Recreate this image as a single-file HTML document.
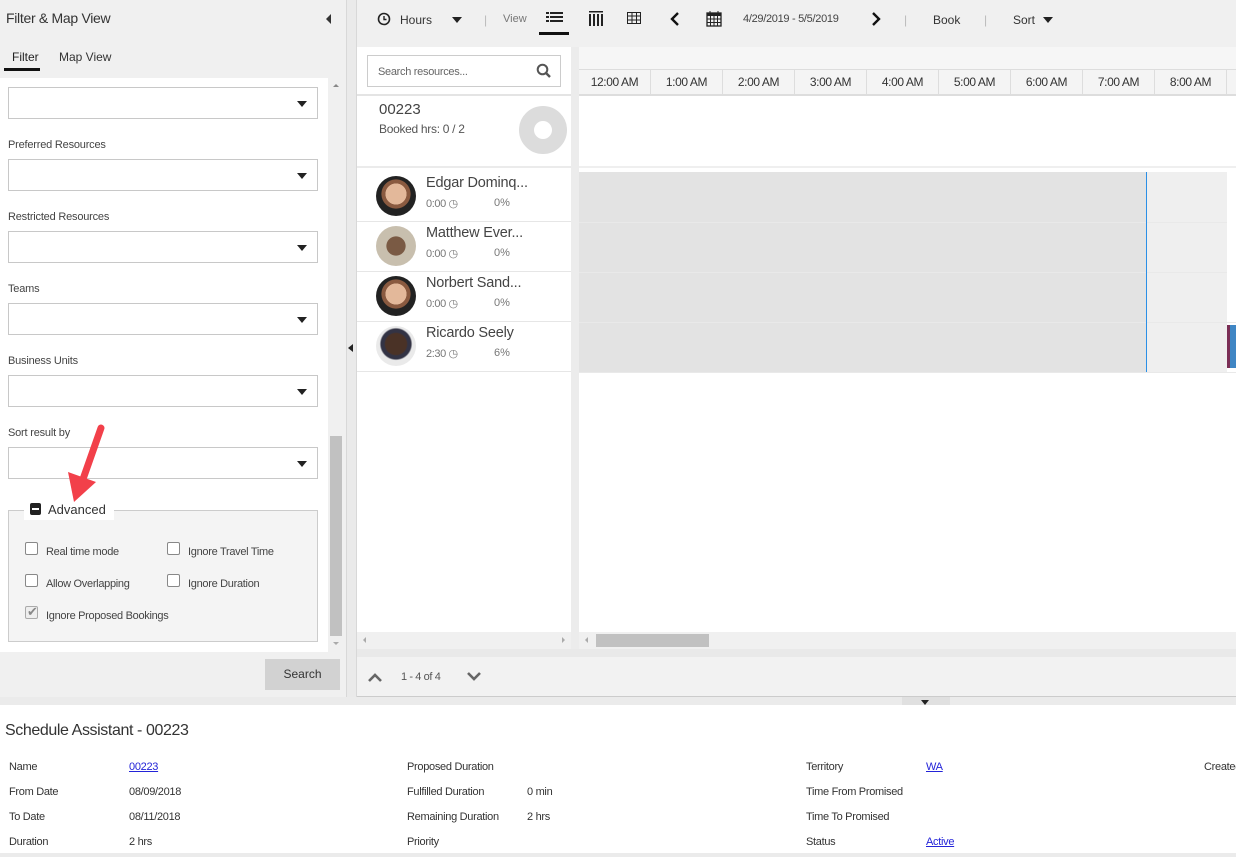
<!DOCTYPE html>
<html><head><meta charset="utf-8"><style>
*{box-sizing:border-box;margin:0;padding:0}
body{width:1236px;height:857px;overflow:hidden;background:#fff;font-family:"Liberation Sans",sans-serif;color:#333;position:relative;font-size:11px}
.a{position:absolute}
.sel{position:absolute;left:8px;width:310px;height:32px;border:1px solid #c8c8c8;background:#fff}
.sel:after{content:"";position:absolute;right:10px;top:13px;border-left:5px solid transparent;border-right:5px solid transparent;border-top:6px solid #222}
.lbl{position:absolute;left:8px;font-size:11px;color:#444;letter-spacing:-0.2px}
.cb{position:absolute;width:13px;height:13px;border:1px solid #888;border-radius:2px;background:#fff}
.cbt{position:absolute;font-size:11px;color:#444;letter-spacing:-0.3px}
.hr{position:absolute;top:70px;height:25px;width:72px;border-right:1px solid #ddd;font-size:12px;color:#333;text-align:center;line-height:25px;letter-spacing:-0.4px}
.row{position:absolute;left:357px;width:214px;height:50px;border-bottom:1px solid #e6e6e6;background:#fff}
.av{position:absolute;left:19px;top:4px;width:40px;height:40px;border-radius:50%;overflow:hidden}
.nm{position:absolute;left:69px;top:3px;font-size:14.5px;color:#444;letter-spacing:-0.2px}
.st{position:absolute;left:69px;top:25px;font-size:11px;color:#777;letter-spacing:-0.4px}
.pc{position:absolute;left:137px;top:25px;font-size:11px;color:#777}
.fl{position:absolute;font-size:11px;color:#333;letter-spacing:-0.3px}
.lnk{text-decoration:underline;color:#2323d8}
</style></head><body>
<div class="a" style="left:0;top:0;width:346px;height:697px;background:#f0f0f0"></div>
<div class="a" style="left:6px;top:10px;font-size:14px;color:#333;letter-spacing:-0.3px">Filter &amp; Map View</div>
<div class="a" style="left:326px;top:14px;border-top:5px solid transparent;border-bottom:5px solid transparent;border-right:5px solid #333"></div>
<div class="a" style="left:12px;top:50px;font-size:12px;color:#222">Filter</div>
<div class="a" style="left:59px;top:50px;font-size:12px;color:#333">Map View</div>
<div class="a" style="left:4px;top:68px;width:36px;height:3px;background:#111"></div>
<div class="a" style="left:0;top:78px;width:328px;height:574px;background:#fff"></div>
<div class="a" style="left:328px;top:78px;width:17px;height:574px;background:#f0f0f0"></div>
<div class="a" style="left:330px;top:436px;width:12px;height:200px;background:#c1c1c1"></div>
<div class="a" style="left:333px;top:84px;border-left:3px solid transparent;border-right:3px solid transparent;border-bottom:3px solid #888"></div>
<div class="a" style="left:333px;top:642px;border-left:3px solid transparent;border-right:3px solid transparent;border-top:3px solid #aaa"></div>
<div class="sel" style="top:87px"></div>
<div class="lbl" style="top:139px">Preferred Resources</div>
<div class="sel" style="top:159px"></div>
<div class="lbl" style="top:211px">Restricted Resources</div>
<div class="sel" style="top:231px"></div>
<div class="lbl" style="top:283px">Teams</div>
<div class="sel" style="top:303px"></div>
<div class="lbl" style="top:355px">Business Units</div>
<div class="sel" style="top:375px"></div>
<div class="lbl" style="top:427px">Sort result by</div>
<div class="sel" style="top:447px"></div>
<div class="a" style="left:8px;top:510px;width:310px;height:132px;border:1px solid #ccc;background:#f4f4f4"></div>
<div class="a" style="left:24px;top:500px;width:90px;height:20px;background:#fff"></div>
<div class="a" style="left:30px;top:503px;width:11px;height:12px;background:#222;border-radius:2px"></div>
<div class="a" style="left:32px;top:508px;width:7px;height:2px;background:#fff"></div>
<div class="a" style="left:48px;top:502px;font-size:13px;color:#333">Advanced</div>
<div class="cb" style="left:25px;top:542px"></div><div class="cbt" style="left:46px;top:546px">Real time mode</div>
<div class="cb" style="left:167px;top:542px"></div><div class="cbt" style="left:188px;top:546px">Ignore Travel Time</div>
<div class="cb" style="left:25px;top:574px"></div><div class="cbt" style="left:46px;top:578px">Allow Overlapping</div>
<div class="cb" style="left:167px;top:574px"></div><div class="cbt" style="left:188px;top:578px">Ignore Duration</div>
<div class="cb" style="left:25px;top:606px;background:#eee;border-color:#aaa"></div><div class="a" style="left:27px;top:604px;font-size:13px;color:#888">✔</div><div class="cbt" style="left:46px;top:610px">Ignore Proposed Bookings</div>
<svg class="a" style="left:60px;top:420px" width="50" height="90"><path d="M41 8 L22 62" stroke="#f2404a" stroke-width="7" stroke-linecap="round"/><path d="M8 52 L14 82 L36 62 Z" fill="#f2404a"/></svg>
<div class="a" style="left:265px;top:659px;width:75px;height:31px;background:#d2d2d2;font-size:12px;color:#333;text-align:center;line-height:31px">Search</div>
<div class="a" style="left:346px;top:0;width:11px;height:697px;background:#eaeaea;border-left:1px solid #d8d8d8;border-right:1px solid #d8d8d8"></div>
<div class="a" style="left:348px;top:344px;border-top:4px solid transparent;border-bottom:4px solid transparent;border-right:5px solid #222"></div>
<div class="a" style="left:357px;top:0;width:879px;height:47px;background:#f0f0f0"></div>
<svg class="a" style="left:377px;top:12px" width="14" height="14"><circle cx="7" cy="7" r="5.5" fill="none" stroke="#222" stroke-width="1.6"/><path d="M7 4V7.5H9.5" stroke="#222" stroke-width="1.4" fill="none"/></svg>
<div class="a" style="left:400px;top:13px;font-size:12px;color:#333">Hours</div>
<div class="a" style="left:452px;top:17px;border-left:5px solid transparent;border-right:5px solid transparent;border-top:6px solid #222"></div>
<div class="a" style="left:484px;top:13px;color:#bbb;font-size:12px">|</div>
<div class="a" style="left:503px;top:13px;font-size:11px;color:#777">View</div>
<svg class="a" style="left:546px;top:11px" width="18" height="14"><g fill="#222"><rect x="0" y="1" width="3" height="2"/><rect x="4" y="1" width="13" height="2"/><rect x="0" y="5" width="3" height="2"/><rect x="4" y="5" width="13" height="2"/><rect x="0" y="9" width="3" height="2"/><rect x="4" y="9" width="13" height="2"/></g></svg>
<div class="a" style="left:539px;top:32px;width:30px;height:3px;background:#111"></div>
<svg class="a" style="left:588px;top:11px" width="16" height="16"><g fill="#222"><rect x="1" y="3" width="2" height="12"/><rect x="5" y="3" width="2" height="12"/><rect x="9" y="3" width="2" height="12"/><rect x="13" y="3" width="2" height="12"/><rect x="1" y="0" width="14" height="1.5"/></g></svg>
<svg class="a" style="left:627px;top:12px" width="15" height="13"><rect x="0.5" y="0.5" width="13" height="11" fill="none" stroke="#222"/><path d="M0 4H14M0 8H14M5 0V12M9.5 0V12" stroke="#222"/></svg>
<svg class="a" style="left:669px;top:11px" width="12" height="16"><path d="M9 2L3 8L9 14" stroke="#111" stroke-width="2.4" fill="none"/></svg>
<svg class="a" style="left:706px;top:10px" width="16" height="17"><rect x="1" y="3" width="14" height="13" fill="none" stroke="#222" stroke-width="1.3"/><rect x="1" y="3" width="14" height="3" fill="#222"/><path d="M4 1V5M12 1V5M1 9H15M1 12.5H15M4.5 6V16M8 6V16M11.5 6V16" stroke="#222"/></svg>
<div class="a" style="left:743px;top:13px;font-size:11px;color:#444;letter-spacing:-0.3px">4/29/2019 - 5/5/2019</div>
<svg class="a" style="left:870px;top:11px" width="12" height="16"><path d="M3 2L9 8L3 14" stroke="#111" stroke-width="2.4" fill="none"/></svg>
<div class="a" style="left:904px;top:13px;color:#bbb;font-size:12px">|</div>
<div class="a" style="left:933px;top:13px;font-size:12px;color:#333">Book</div>
<div class="a" style="left:984px;top:13px;color:#bbb;font-size:12px">|</div>
<div class="a" style="left:1013px;top:13px;font-size:12px;color:#333">Sort</div>
<div class="a" style="left:1043px;top:17px;border-left:5px solid transparent;border-right:5px solid transparent;border-top:6px solid #222"></div>
<div class="a" style="left:357px;top:47px;width:214px;height:603px;background:#fff"></div>
<div class="a" style="left:571px;top:47px;width:8px;height:603px;background:#ececec"></div>
<div class="a" style="left:367px;top:55px;width:194px;height:32px;border:1px solid #ccc;background:#fff"></div>
<div class="a" style="left:378px;top:66px;font-size:11px;color:#666;letter-spacing:-0.3px">Search resources...</div>
<svg class="a" style="left:536px;top:63px" width="16" height="16"><circle cx="6.5" cy="6.5" r="4.8" fill="none" stroke="#555" stroke-width="2"/><path d="M10 10L14 14" stroke="#555" stroke-width="2.4"/></svg>
<div class="a" style="left:357px;top:94px;width:214px;height:2px;background:#e4e4e4"></div>
<div class="a" style="left:379px;top:101px;font-size:15px;color:#444">00223</div>
<div class="a" style="left:379px;top:122px;font-size:12px;color:#555;letter-spacing:-0.3px">Booked hrs: 0 / 2</div>
<div class="a" style="left:519px;top:106px;width:48px;height:48px;border-radius:50%;border:15px solid #dcdcdc;background:#fff"></div>
<div class="a" style="left:357px;top:166px;width:214px;height:2px;background:#ebebeb"></div>
<div class="row" style="top:172px"><div class="av" style="background:radial-gradient(circle at 50% 45%,#e3b89a 0 35%,#8a5a40 36% 48%,#222 50%)"></div><div class="nm">Edgar Dominq...</div><div class="st">0:00 ◷</div><div class="pc">0%</div></div>
<div class="row" style="top:222px"><div class="av" style="background:radial-gradient(circle at 50% 50%,#7a5a44 0 33%,#c8bfae 35%)"></div><div class="nm">Matthew Ever...</div><div class="st">0:00 ◷</div><div class="pc">0%</div></div>
<div class="row" style="top:272px"><div class="av" style="background:radial-gradient(circle at 50% 45%,#e3b89a 0 35%,#8a5a40 36% 48%,#222 50%)"></div><div class="nm">Norbert Sand...</div><div class="st">0:00 ◷</div><div class="pc">0%</div></div>
<div class="row" style="top:322px"><div class="av" style="background:radial-gradient(circle at 50% 45%,#4a3226 0 35%,#334 40% 50%,#eaeaea 55%)"></div><div class="nm">Ricardo Seely</div><div class="st">2:30 ◷</div><div class="pc">6%</div></div>
<div class="a" style="left:357px;top:632px;width:214px;height:17px;background:#f0f0f0"></div>
<div class="a" style="left:363px;top:637px;border-top:3px solid transparent;border-bottom:3px solid transparent;border-right:3px solid #aaa"></div>
<div class="a" style="left:562px;top:637px;border-top:3px solid transparent;border-bottom:3px solid transparent;border-left:3px solid #aaa"></div>
<div class="a" style="left:579px;top:47px;width:657px;height:23px;background:#f6f6f6;border-bottom:1px solid #ddd"></div>
<div class="a" style="left:579px;top:70px;width:657px;height:25px;background:#f4f4f4"></div>
<div class="hr" style="left:579px">12:00 AM</div><div class="hr" style="left:651px">1:00 AM</div><div class="hr" style="left:723px">2:00 AM</div><div class="hr" style="left:795px">3:00 AM</div><div class="hr" style="left:867px">4:00 AM</div><div class="hr" style="left:939px">5:00 AM</div><div class="hr" style="left:1011px">6:00 AM</div><div class="hr" style="left:1083px">7:00 AM</div><div class="hr" style="left:1155px">8:00 AM</div>
<div class="a" style="left:579px;top:94px;width:657px;height:2px;background:#ddd"></div>
<div class="a" style="left:579px;top:166px;width:657px;height:2px;background:#efefef"></div>
<div class="a" style="left:579px;top:172px;width:567px;height:200px;background:#e3e3e3"></div>
<div class="a" style="left:1147px;top:172px;width:80px;height:200px;background:#efefef"></div>
<div class="a" style="left:579px;top:222px;width:648px;height:1px;background:#e9e9e9"></div>
<div class="a" style="left:579px;top:272px;width:648px;height:1px;background:#e9e9e9"></div>
<div class="a" style="left:579px;top:322px;width:657px;height:1px;background:#e9e9e9"></div>
<div class="a" style="left:579px;top:372px;width:657px;height:1px;background:#e9e9e9"></div>
<div class="a" style="left:1146px;top:172px;width:1px;height:200px;background:#2b8fe6"></div>
<div class="a" style="left:1227px;top:325px;width:3px;height:43px;background:#7a2e55"></div>
<div class="a" style="left:1230px;top:325px;width:6px;height:43px;background:#3f86c4"></div>
<div class="a" style="left:579px;top:632px;width:657px;height:17px;background:#f0f0f0"></div>
<div class="a" style="left:585px;top:637px;border-top:3px solid transparent;border-bottom:3px solid transparent;border-right:3px solid #aaa"></div>
<div class="a" style="left:596px;top:634px;width:113px;height:13px;background:#c1c1c1"></div>
<div class="a" style="left:357px;top:649px;width:879px;height:8px;background:#e9e9e9"></div>
<div class="a" style="left:357px;top:657px;width:879px;height:40px;background:#f2f2f2;border-bottom:1px solid #ccc"></div>
<svg class="a" style="left:367px;top:671px" width="16" height="12"><path d="M2 10L8 4L14 10" stroke="#666" stroke-width="2.6" fill="none"/></svg>
<div class="a" style="left:401px;top:671px;font-size:11px;color:#555;letter-spacing:-0.4px">1 - 4 of 4</div>
<svg class="a" style="left:466px;top:671px" width="16" height="12"><path d="M2 2L8 8L14 2" stroke="#666" stroke-width="2.6" fill="none"/></svg>
<div class="a" style="left:0;top:697px;width:1236px;height:8px;background:#ebebeb"></div>
<div class="a" style="left:902px;top:697px;width:48px;height:8px;background:#e0e0e0"></div>
<div class="a" style="left:921px;top:700px;border-left:4px solid transparent;border-right:4px solid transparent;border-top:5px solid #222"></div>
<div class="a" style="left:5px;top:722px;font-size:16px;color:#333;letter-spacing:-0.4px">Schedule Assistant - 00223</div>
<div class="fl" style="left:9px;top:761px">Name</div><div class="fl" style="left:129px;top:761px"><span class="lnk">00223</span></div>
<div class="fl" style="left:9px;top:786px">From Date</div><div class="fl" style="left:129px;top:786px">08/09/2018</div>
<div class="fl" style="left:9px;top:811px">To Date</div><div class="fl" style="left:129px;top:811px">08/11/2018</div>
<div class="fl" style="left:9px;top:836px">Duration</div><div class="fl" style="left:129px;top:836px">2 hrs</div>
<div class="fl" style="left:407px;top:761px">Proposed Duration</div>
<div class="fl" style="left:407px;top:786px">Fulfilled Duration</div><div class="fl" style="left:527px;top:786px">0 min</div>
<div class="fl" style="left:407px;top:811px">Remaining Duration</div><div class="fl" style="left:527px;top:811px">2 hrs</div>
<div class="fl" style="left:407px;top:836px">Priority</div>
<div class="fl" style="left:806px;top:761px">Territory</div><div class="fl" style="left:926px;top:761px"><span class="lnk">WA</span></div>
<div class="fl" style="left:806px;top:786px">Time From Promised</div>
<div class="fl" style="left:806px;top:811px">Time To Promised</div>
<div class="fl" style="left:806px;top:836px">Status</div><div class="fl" style="left:926px;top:836px"><span class="lnk">Active</span></div>
<div class="fl" style="left:1204px;top:761px;white-space:nowrap">Created</div>
<div class="a" style="left:0;top:853px;width:1236px;height:4px;background:#ebebeb"></div>
</body></html>
